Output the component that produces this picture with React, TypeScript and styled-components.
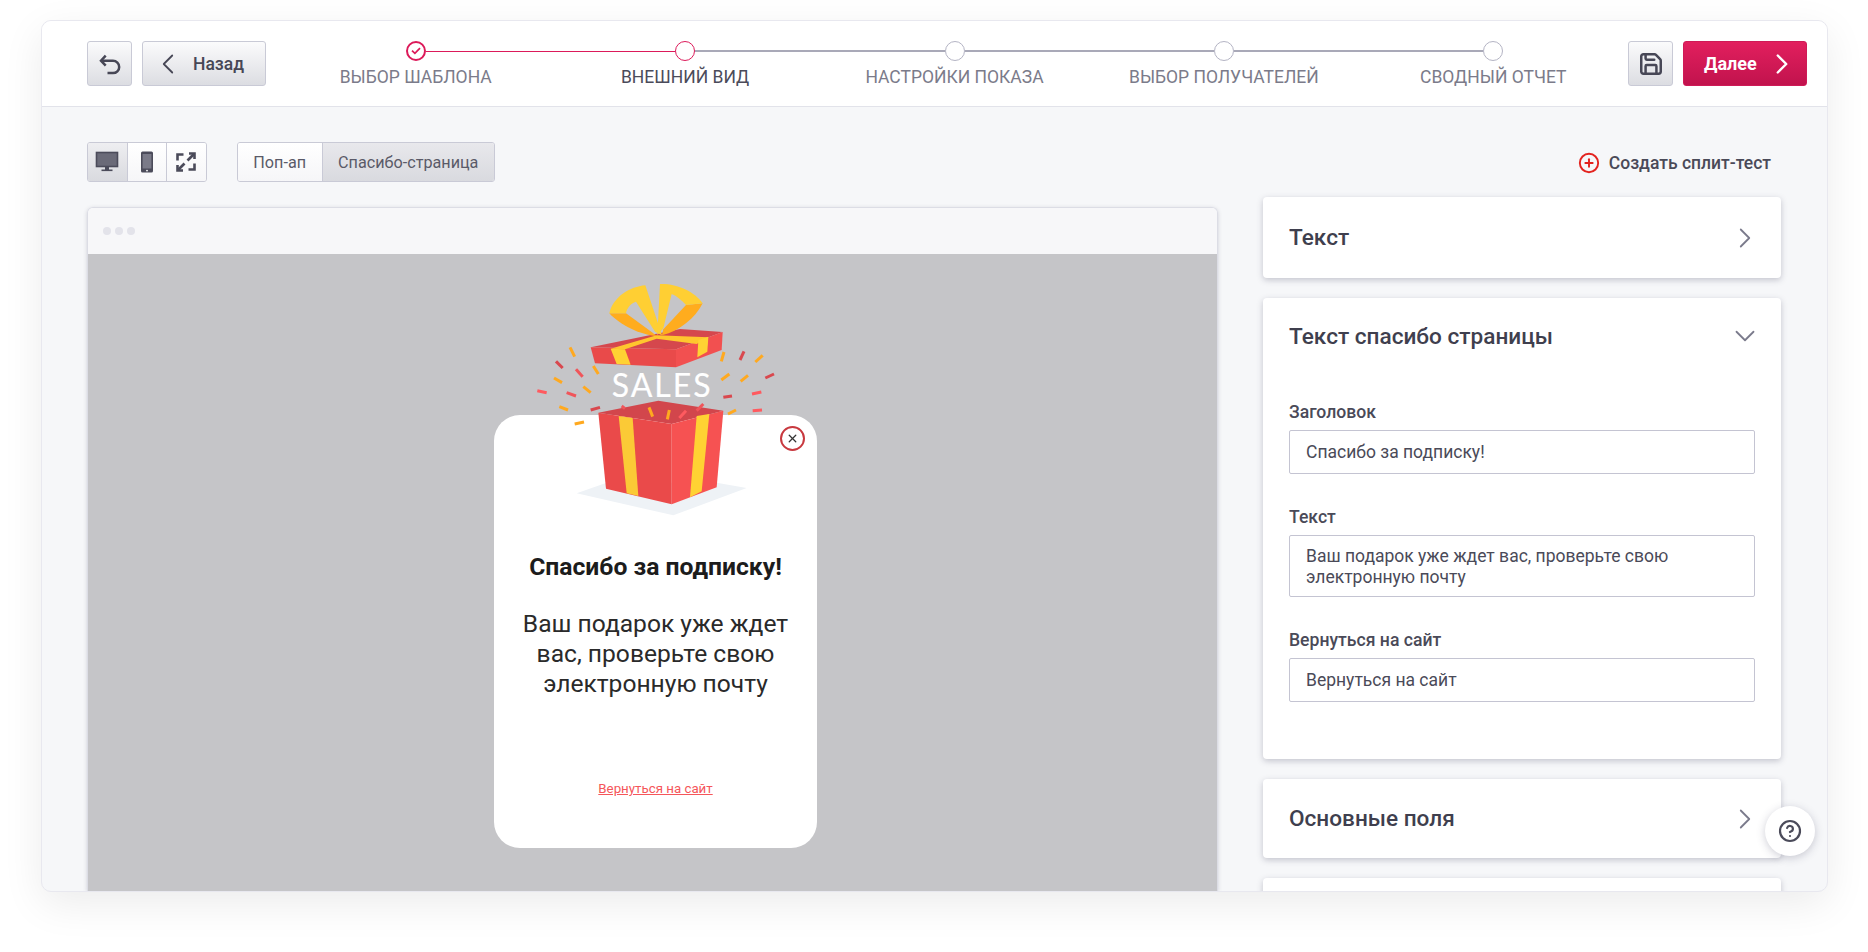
import React, { FunctionComponent } from "react";
import styled, { createGlobalStyle } from "styled-components";
import {
  ChevronDown,
  ChevronLeft,
  ChevronRight,
  CircleHelp,
  CirclePlus,
  Save,
  X,
} from "lucide-react";

const GlobalStyle = createGlobalStyle`
  html, body {
    margin: 0;
    height: 100%;
    overflow: hidden;
    background: #fff;
    font-family: Roboto, "Noto Sans", sans-serif;
    color: #3f3f4e;
  }
`;

const STEPS = [
  "Выбор шаблона",
  "Внешний вид",
  "Настройки показа",
  "Выбор получателей",
  "Сводный отчет",
];

const ORANGE = "#ffa91f";
const RED = "#f0555a";
const DARK = "#d9484e";
const PINK = "#ff5a5f";

const CONFETTI: [number, number, number, number, string][] = [
  [210, 262, 224, 290, ORANGE],
  [168, 304, 188, 324, DARK],
  [228, 328, 248, 350, RED],
  [280, 318, 295, 342, ORANGE],
  [162, 354, 186, 368, ORANGE],
  [112, 392, 140, 398, PINK],
  [200, 398, 228, 408, RED],
  [250, 380, 272, 398, ORANGE],
  [178, 440, 204, 450, ORANGE],
  [272, 450, 300, 442, DARK],
  [224, 492, 252, 486, ORANGE],
  [672, 276, 664, 304, ORANGE],
  [732, 274, 720, 300, DARK],
  [788, 286, 766, 306, ORANGE],
  [664, 360, 688, 342, ORANGE],
  [722, 364, 744, 346, ORANGE],
  [796, 354, 822, 342, DARK],
  [670, 412, 696, 408, DARK],
  [756, 402, 784, 396, PINK],
  [684, 462, 708, 450, ORANGE],
  [758, 452, 786, 450, PINK],
];

const INNER_CONFETTI: [number, number, number, number, string][] = [
  [365, 438, 375, 446, RED],
  [447, 442, 458, 470, ORANGE],
  [508, 450, 502, 478, ORANGE],
  [538, 474, 558, 452, PINK],
  [590, 452, 610, 432, RED],
];

const Confetti: FunctionComponent<{ items: typeof CONFETTI }> = ({ items }) => (
  <>
    {items.map(([x1, y1, x2, y2, color]) => (
      <line
        key={`${x1}-${y1}`}
        x1={x1}
        y1={y1}
        x2={x2}
        y2={y2}
        stroke={color}
        strokeWidth={9}
      />
    ))}
  </>
);

const GiftPicture = () => (
  <GiftSvg viewBox="0 0 1020 810">
    <polygon points="230,700 320,668 650,668 740,684 520,766" fill="#eef2f6" />
    <Confetti items={CONFETTI} />
    {/* коробка */}
    <polygon points="295,458 475,422 670,452 515,492" fill="#d2464c" />
    <polygon points="295,458 515,492 515,733 318,686" fill="#ea4a4a" />
    <polygon points="515,492 670,452 650,682 515,733" fill="#f65252" />
    <polygon points="356,468 398,474 415,708 380,700" fill="#fbca36" />
    <polygon points="590,468 628,462 605,694 570,712" fill="#ffd233" />
    <Confetti items={INNER_CONFETTI} />
    {/* крышка */}
    <polygon points="272,262 540,207 668,216 528,268" fill="#d5474d" />
    <polygon points="272,262 528,268 528,322 285,310" fill="#e94a4a" />
    <polygon points="528,268 668,216 665,270 528,322" fill="#f25050" />
    <polygon points="332,266 470,226 625,232 590,252 470,236 375,268" fill="#ffc62e" />
    <polygon points="332,266 375,268 392,314 350,312" fill="#ffd233" />
    <polygon points="595,240 625,230 622,275 592,292" fill="#ffd233" />
    {/* бант */}
    <path d="M328,160 L378,160 L458,218 L470,228 C420,225 360,195 328,160 Z" fill="#ffac1e" />
    <path d="M328,160 C340,110 390,80 436,76 L486,226 L465,215 L408,125 C392,130 380,145 378,160 Z" fill="#ffcf33" />
    <path d="M608,130 L558,135 L490,208 L486,226 C540,212 585,175 608,130 Z" fill="#ffac1e" />
    <path d="M472,225 L480,72 C530,70 585,95 608,130 L558,135 C545,120 530,108 515,102 L490,205 Z" fill="#ffcf33" />
    <SalesText x={335} y={410} textLength={297}>
      SALES
    </SalesText>
  </GiftSvg>
);

const UndoIcon = () => (
  <svg width="24" height="24" viewBox="0 0 24 24" fill="none" stroke="#474756" strokeWidth="2.5">
    <path d="M7.7 3.7L3 8.7L7.7 13.7" />
    <path d="M3 8.7H15A6.2 6.2 0 0 1 15 21.1H9.5" />
  </svg>
);

const MonitorIcon = () => (
  <svg width="24" height="22" viewBox="0 0 24 22" fill="none">
    <rect x="1.5" y="1.5" width="21" height="14" fill="#6a6a78" stroke="#4b4b5a" strokeWidth="1.6" />
    <rect x="10" y="16" width="4" height="3" fill="#4b4b5a" />
    <rect x="6.5" y="18.5" width="11" height="1.6" fill="#4b4b5a" />
  </svg>
);

const PhoneIcon = () => (
  <svg width="14" height="22" viewBox="0 0 14 22" fill="none">
    <rect x="1" y="0.5" width="12" height="21" rx="1.5" fill="#4b4b5a" />
    <rect x="2.6" y="3" width="8.8" height="14.5" fill="#7a7a88" />
    <circle cx="7" cy="19.6" r="0.9" fill="#fff" />
  </svg>
);

const ExpandIcon = () => (
  <svg width="22" height="22" viewBox="0 0 22 22" fill="none" stroke="#4b4b5a" strokeWidth="2.6">
    <path d="M2.5 9.5V3.5H8.5" />
    <path d="M19.5 12.5V18.5H13.5" />
    <path d="M12.5 9.5L19 3" />
    <path d="M14 2.5H19.5V8" />
    <path d="M9.5 12.5L3 19" />
    <path d="M2.5 14V19.5H8" />
  </svg>
);

const SuccessCheck = () => (
  <svg width="10" height="8" viewBox="0 0 10 8" fill="none" stroke="#dc1a5a" strokeWidth="1.7">
    <path d="M1 3.6L3.9 6.4L9 1.2" />
  </svg>
);

const Stepper = () => (
  <StepperRow>
    {STEPS.map((label, index) => {
      const reached = index <= 1;
      return (
        <Step key={label}>
          <StepTrack>
            <StepLine $hidden={index === 0} $pink={index === 1} />
            <StepDot $pink={reached} $thick={index === 0}>
              {index === 0 && <SuccessCheck />}
            </StepDot>
            <StepLine $hidden={index === STEPS.length - 1} $pink={index === 0} />
          </StepTrack>
          <StepLabel $active={index === 1}>{label}</StepLabel>
        </Step>
      );
    })}
  </StepperRow>
);

export default function App() {
  return (
    <>
      <GlobalStyle />
      <Frame>
        <Header>
          <IconButton $width={45}>
            <UndoIcon />
          </IconButton>
          <BackButton>
            <ChevronLeft size={34} strokeWidth={1.25} />
            Назад
          </BackButton>
          <Stepper />
          <IconButton $width={45}>
            <Save size={26} strokeWidth={2.3} />
          </IconButton>
          <NextButton>
            Далее
            <ChevronRight size={34} strokeWidth={1.7} />
          </NextButton>
        </Header>
        <Main>
          <LeftColumn>
            <Toolbar>
              <ButtonGroup>
                <GroupIcon $active>
                  <MonitorIcon />
                </GroupIcon>
                <GroupIcon>
                  <PhoneIcon />
                </GroupIcon>
                <GroupIcon>
                  <ExpandIcon />
                </GroupIcon>
              </ButtonGroup>
              <ButtonGroup>
                <GroupTab>Поп-ап</GroupTab>
                <GroupTab $active>Спасибо-страница</GroupTab>
              </ButtonGroup>
            </Toolbar>
            <Preview>
              <PreviewBar>
                <PreviewDot />
                <PreviewDot />
                <PreviewDot />
              </PreviewBar>
              <Stage>
                <Popup>
                  <GiftPicture />
                  <CloseButton>
                    <X size={13} strokeWidth={2.4} />
                  </CloseButton>
                  <PopupTitle>Спасибо за подписку!</PopupTitle>
                  <PopupText>
                    Ваш подарок уже ждет вас, проверьте свою электронную почту
                  </PopupText>
                  <PopupLink>Вернуться на сайт</PopupLink>
                </Popup>
              </Stage>
            </Preview>
          </LeftColumn>
          <RightColumn>
            <SplitRow>
              <CirclePlus size={22} color="#e3231f" strokeWidth={2.1} />
              Создать сплит-тест
            </SplitRow>
            <Panel>
              <PanelHeader $height={81}>
                <PanelTitle>Текст</PanelTitle>
                <ChevronRight size={34} strokeWidth={1.25} color="#7b7b8c" />
              </PanelHeader>
            </Panel>
            <Panel>
              <PanelHeader $height={76}>
                <PanelTitle>Текст спасибо страницы</PanelTitle>
                <ChevronDown size={34} strokeWidth={1.25} color="#7b7b8c" />
              </PanelHeader>
              <PanelForm>
                <FieldLabel>Заголовок</FieldLabel>
                <TextInput readOnly value="Спасибо за подписку!" />
                <FieldLabel>Текст</FieldLabel>
                <TextArea
                  readOnly
                  value="Ваш подарок уже ждет вас, проверьте свою электронную почту"
                />
                <FieldLabel>Вернуться на сайт</FieldLabel>
                <TextInput readOnly value="Вернуться на сайт" />
              </PanelForm>
            </Panel>
            <Panel>
              <PanelHeader $height={79}>
                <PanelTitle>Основные поля</PanelTitle>
                <ChevronRight size={34} strokeWidth={1.25} color="#7b7b8c" />
              </PanelHeader>
            </Panel>
            <Panel>
              <PanelHeader $height={80} />
            </Panel>
          </RightColumn>
        </Main>
        <HelpButton>
          <CircleHelp size={24} strokeWidth={2.2} />
        </HelpButton>
      </Frame>
    </>
  );
}

const Frame = styled.div`
  position: relative;
  display: flex;
  flex-direction: column;
  box-sizing: border-box;
  width: 1787px;
  height: 872px;
  margin: 20px 0 0 41px;
  overflow: hidden;
  background: #f6f7f9;
  border: 1px solid #e8e8ef;
  border-radius: 10px;
  box-shadow: 0 12px 40px rgba(0, 0, 0, 0.08);
`;

const Header = styled.header`
  display: flex;
  flex: none;
  align-items: flex-start;
  box-sizing: border-box;
  height: 86px;
  padding: 20px 20px 0 45px;
  background: #fff;
  border-bottom: 1px solid #e2e3ea;
`;

const buttonBase = `
  display: flex;
  align-items: center;
  justify-content: center;
  box-sizing: border-box;
  height: 45px;
  border: 1px solid #c9cad6;
  border-radius: 3px;
  background: linear-gradient(180deg, #fbfbfc 0%, #dcdde2 100%);
  color: #474756;
`;

const IconButton = styled.div<{ $width: number }>`
  ${buttonBase}
  flex: none;
  width: ${(p) => p.$width}px;
`;

const BackButton = styled.div`
  ${buttonBase}
  flex: none;
  justify-content: flex-start;
  width: 124px;
  margin-left: 10px;
  padding-left: 8px;
  gap: 8px;
  font-size: 17.5px;
  font-weight: 500;
`;

const NextButton = styled.div`
  ${buttonBase}
  flex: none;
  justify-content: flex-start;
  width: 124px;
  margin-left: 10px;
  padding-left: 20px;
  gap: 8px;
  border-color: #cf1a57;
  background: linear-gradient(180deg, #e21f5e 0%, #c1134d 100%);
  color: #fff;
  font-size: 18px;
  font-weight: 700;
`;

const StepperRow = styled.div`
  display: grid;
  flex: 1;
  grid-template-columns: repeat(5, 1fr);
  margin-left: 15px;
`;

const Step = styled.div`
  display: flex;
  flex-direction: column;
  align-items: stretch;
`;

const StepTrack = styled.div`
  display: flex;
  align-items: center;
  height: 20px;
`;

const StepLine = styled.div<{ $hidden?: boolean; $pink?: boolean }>`
  flex: 1;
  height: ${(p) => (p.$pink ? 1 : 1.5)}px;
  background: ${(p) =>
    p.$hidden ? "transparent" : p.$pink ? "#dc1a5a" : "#a9a9b8"};
`;

const StepDot = styled.div<{ $pink?: boolean; $thick?: boolean }>`
  display: flex;
  flex: none;
  align-items: center;
  justify-content: center;
  box-sizing: border-box;
  width: 20px;
  height: 20px;
  border: ${(p) => (p.$thick ? 2.5 : p.$pink ? 1.5 : 1)}px solid
    ${(p) => (p.$pink ? "#dc1a5a" : "#b4b4c4")};
  border-radius: 50%;
  background: #fff;
`;

const StepLabel = styled.div<{ $active?: boolean }>`
  margin-top: 5px;
  font-size: 17.5px;
  line-height: 22px;
  text-align: center;
  text-transform: uppercase;
  color: ${(p) => (p.$active ? "#4b4b5a" : "#7b7b8a")};
`;

const Main = styled.main`
  display: flex;
  flex: 1;
  gap: 45px;
  min-height: 0;
  padding: 35px 46px 0 45px;
`;

const LeftColumn = styled.div`
  display: flex;
  flex: none;
  flex-direction: column;
  width: 1131px;
`;

const Toolbar = styled.div`
  display: flex;
  flex: none;
  gap: 30px;
  height: 40px;
  margin-bottom: 25px;
`;

const ButtonGroup = styled.div`
  display: flex;
  overflow: hidden;
  border: 1px solid #c9cad6;
  border-radius: 3px;
`;

const GroupIcon = styled.div<{ $active?: boolean }>`
  display: flex;
  align-items: center;
  justify-content: center;
  width: 38.6px;
  background: ${(p) =>
    p.$active
      ? "linear-gradient(180deg, #eeeef1 0%, #d9dadf 100%)"
      : "linear-gradient(180deg, #ffffff 0%, #f6f6f8 100%)"};
  & + & {
    border-left: 1px solid #c9cad6;
  }
`;

const GroupTab = styled.div<{ $active?: boolean }>`
  display: flex;
  align-items: center;
  padding: 0 15.5px;
  font-size: 16.2px;
  color: #5a5a68;
  background: ${(p) =>
    p.$active
      ? "linear-gradient(180deg, #e8e8ec 0%, #d9dadf 100%)"
      : "linear-gradient(180deg, #ffffff 0%, #f6f6f8 100%)"};
  & + & {
    border-left: 1px solid #c9cad6;
  }
`;

const Preview = styled.div`
  display: flex;
  flex: 1;
  flex-direction: column;
  min-height: 0;
  overflow: hidden;
  border: 1px solid #dcdde5;
  border-bottom: none;
  border-radius: 6px 6px 0 0;
  box-shadow: 0 1px 4px rgba(60, 60, 90, 0.2);
`;

const PreviewBar = styled.div`
  display: flex;
  flex: none;
  align-items: center;
  gap: 4px;
  height: 46px;
  padding-left: 15px;
  background: #f7f7f9;
`;

const PreviewDot = styled.span`
  width: 8px;
  height: 8px;
  border-radius: 50%;
  background: #e3e3ea;
`;

const Stage = styled.div`
  flex: 1;
  padding: 161px 0 0 406px;
  background: #c5c5c8;
`;

const Popup = styled.div`
  position: relative;
  box-sizing: border-box;
  width: 323px;
  height: 433px;
  padding-top: 137px;
  border-radius: 26px;
  background: #fff;
  text-align: center;
  color: #1c1c1c;
`;

const GiftSvg = styled.svg`
  position: absolute;
  top: -155px;
  left: 6px;
  width: 340px;
  height: 270px;
  pointer-events: none;
`;

const SalesText = styled.text`
  font-family: "Lato", "DejaVu Sans", sans-serif;
  font-size: 96px;
  font-weight: 400;
  fill: #fff;
  stroke: #fff;
  stroke-width: 0.5px;
`;

const CloseButton = styled.div`
  position: absolute;
  top: 11px;
  right: 12px;
  display: flex;
  align-items: center;
  justify-content: center;
  box-sizing: border-box;
  width: 25px;
  height: 25px;
  border: 2.5px solid #c8393f;
  border-radius: 50%;
  background: #fff;
  color: #333;
`;

const PopupTitle = styled.div`
  font-size: 24.7px;
  font-weight: 700;
  line-height: 30px;
`;

const PopupText = styled.div`
  width: 270px;
  margin: 27px auto 0;
  font-size: 24.6px;
  font-weight: 400;
  line-height: 30px;
  color: #2a2a2a;
`;

const PopupLink = styled.div`
  margin-top: 82px;
  font-size: 13.3px;
  line-height: 16px;
  text-decoration: underline;
  color: #f5565a;
`;

const RightColumn = styled.div`
  display: flex;
  flex: 1;
  flex-direction: column;
  gap: 20px;
  min-width: 0;
`;

const SplitRow = styled.div`
  display: flex;
  flex: none;
  align-items: center;
  justify-content: flex-end;
  gap: 9px;
  box-sizing: border-box;
  height: 40px;
  margin-bottom: -5px;
  padding: 1px 10px 0 0;
  font-size: 17.5px;
  font-weight: 500;
  color: #4a4a58;
`;

const Panel = styled.section`
  flex: none;
  border-radius: 4px;
  background: #fff;
  box-shadow: 0 2px 6px rgba(60, 60, 90, 0.28);
`;

const PanelHeader = styled.div<{ $height: number }>`
  display: flex;
  align-items: center;
  justify-content: space-between;
  height: ${(p) => p.$height}px;
  padding: 0 19px 0 26px;
`;

const PanelTitle = styled.div`
  font-size: 22.6px;
  font-weight: 500;
  color: #3f3f4e;
`;

const PanelForm = styled.div`
  display: flex;
  flex-direction: column;
  padding: 28px 26px 57px;
`;

const FieldLabel = styled.label`
  margin-bottom: 8px;
  font-size: 17.6px;
  font-weight: 500;
  line-height: 20px;
  color: #4a4a58;
  input + &,
  textarea + & {
    margin-top: 33px;
  }
`;

const fieldBase = `
  box-sizing: border-box;
  width: 100%;
  padding: 0 16px;
  border: 1px solid #c4c4d2;
  border-radius: 2px;
  outline: none;
  background: #fff;
  font-family: Roboto, sans-serif;
  font-size: 17.5px;
  color: #4a4a58;
`;

const TextInput = styled.input`
  ${fieldBase}
  height: 44px;
`;

const TextArea = styled.textarea`
  ${fieldBase}
  display: block;
  height: 62px;
  padding-top: 10px;
  line-height: 21px;
  resize: none;
`;

const HelpButton = styled.div`
  position: absolute;
  right: 12px;
  bottom: 35px;
  display: flex;
  align-items: center;
  justify-content: center;
  width: 50px;
  height: 50px;
  border-radius: 50%;
  background: #fff;
  box-shadow: 0 2px 8px rgba(60, 60, 90, 0.25);
  color: #4b4b5a;
`;
